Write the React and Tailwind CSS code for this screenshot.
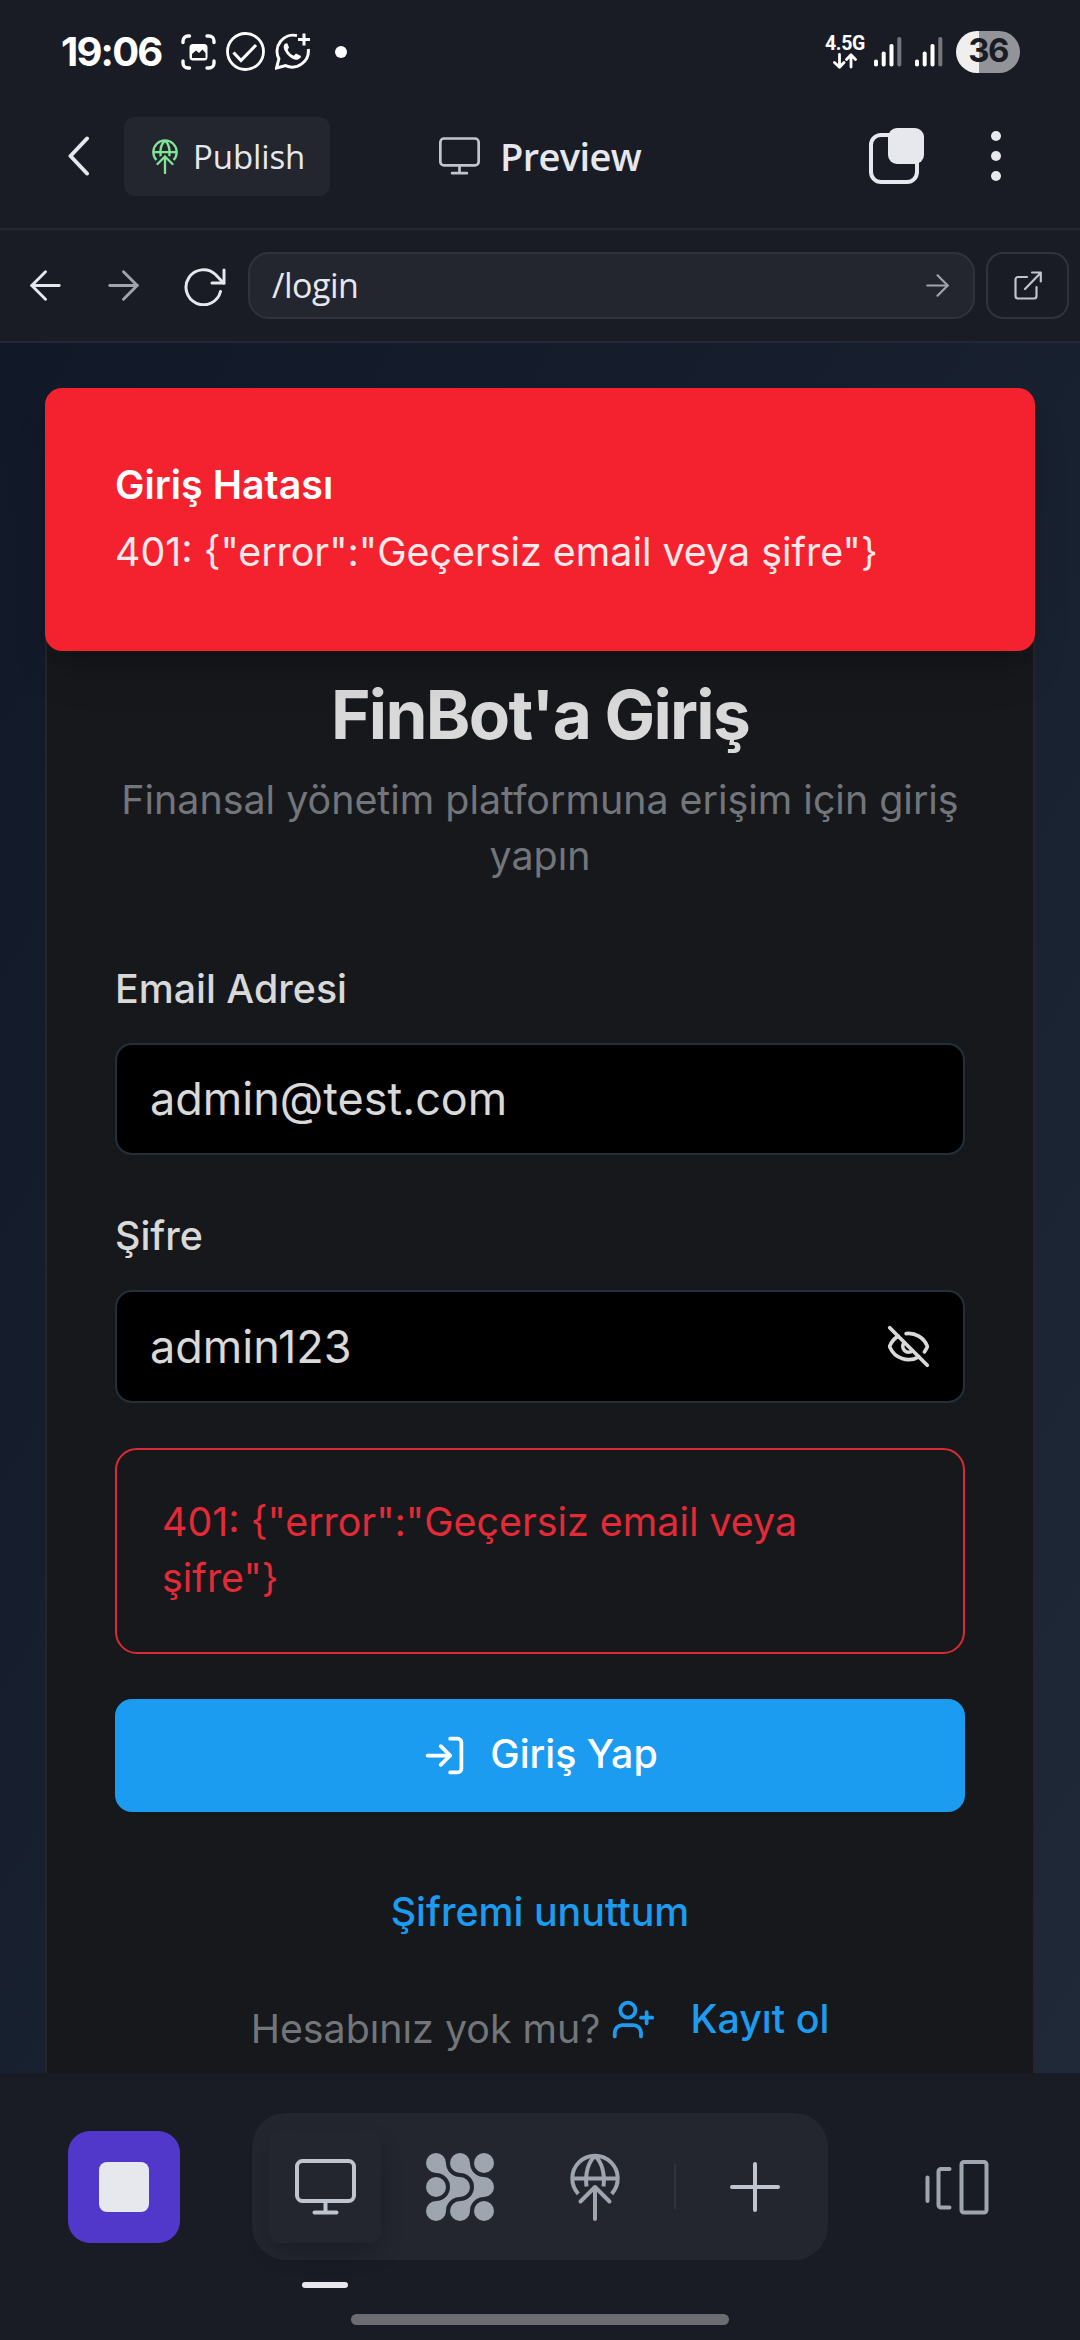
import React from "react";
import { ArrowLeft, ArrowRight, EyeOff, LogIn, UserPlus } from "lucide-react";

function PublishGlobe({ className, strokeWidth = 4 }) {
  return (
    <svg viewBox="0 0 50 68" fill="none" stroke="currentColor" strokeWidth={strokeWidth} strokeLinecap="round" strokeLinejoin="round" className={className}>
      <path d="M8.3 40.8A22.7 22.7 0 1 1 41.7 40.8" strokeLinecap="butt" />
      <path d="M2.5 25.5H47.5" strokeLinecap="butt" />
      <path d="M25 3C18 9 15 21 16.5 33.5M25 3C32 9 35 21 33.5 33.5" strokeLinecap="butt" />
      <path d="M25 34V66M10.5 48.5L25 34L39.5 48.5" />
    </svg>
  );
}

function Monitor({ className, strokeWidth = 4 }) {
  return (
    <svg viewBox="0 0 61 56" fill="none" stroke="currentColor" strokeWidth={strokeWidth} strokeLinecap="round" className={className}>
      <rect x="2" y="2" width="57" height="40" rx="5.5" />
      <path d="M30.5 42V53M19.5 53.5H41.5" />
    </svg>
  );
}

function Signal() {
  return (
    <svg viewBox="0 0 28 30" className="h-[30px] w-7" fill="white">
      <rect x="0" y="22.5" width="4" height="7" rx="1.8" />
      <rect x="7.7" y="14.5" width="4" height="15" rx="1.8" />
      <rect x="15.5" y="7" width="4" height="22.5" rx="1.8" />
      <rect x="23.3" y="0" width="4" height="29.5" rx="1.8" fill="#75767b" />
    </svg>
  );
}

function StatusBar() {
  return (
    <div className="flex h-[103px] shrink-0 items-center pl-[61px] pr-[60px] text-white">
      <span className="w-[101px] text-[40px] leading-none font-bold tracking-[-1.8px] whitespace-nowrap">19:06</span>
      <svg viewBox="0 0 35 36" fill="none" stroke="currentColor" strokeWidth="3.400" className="ml-[19px] h-9 w-[35px]" strokeLinecap="round">
        <path d="M2 8.500V7A5 5 0 0 1 7 2H8.500M26 2H28A5 5 0 0 1 33 7V8.500M33 27V29A5 5 0 0 1 28 34H26M8.500 34H7A5 5 0 0 1 2 29V27" />
        <rect x="8.500" y="10" width="18" height="16.500" rx="3.500" fill="white" stroke="none" />
        <path d="M11 24V20L15 16.500L18 19L21.500 15.500L24.500 19V24Z" fill="#1a1c25" stroke="none" />
      </svg>
      <svg viewBox="0 0 39 39" fill="none" stroke="currentColor" strokeWidth="2.8" className="ml-[10px] h-[39px] w-[39px]">
        <circle cx="19.500" cy="19.500" r="18" />
        <path d="M7.500 20.500L15 28.500L30 13" strokeWidth="3.200" />
      </svg>
      <svg viewBox="0 0 35 37" fill="none" stroke="currentColor" strokeWidth="3" className="ml-[10px] h-[37px] w-[35px]">
        <path d="M22 2.600A16.200 16.200 0 0 0 3.900 25.800L1.500 35L10.600 32.600A16.200 16.200 0 0 0 33.300 16" />
        <path d="M29 0.500V12.500M23 6.500H35" />
        <path d="M10.500 10.500C8.500 11.500 8 14.500 10 18C12.500 22.500 16.500 26 20.500 26.800C23.500 27.200 26 25 26 23L21 20.500L18.800 22.800C16 21.800 13.500 19 12.600 16.800L14 14.500L12.300 10.300Z" fill="white" stroke="none" />
      </svg>
      <span className="ml-[25px] size-3 rounded-full bg-white" />
      <div className="ml-auto flex w-9 flex-col items-center">
        <span className="font-['Roboto'] text-[19.5px] leading-[18px] font-bold tracking-[-0.3px]">4.5G</span>
        <svg viewBox="0 0 24 16" fill="none" stroke="currentColor" strokeWidth="2.800" strokeLinecap="round" strokeLinejoin="round" className="h-4 w-6">
          <path d="M6.500 1.500V14M1.500 9.500L6.500 14.300L11 9.500M18 14V2M13.500 6.500L18 1.700L22.500 6.500" />
        </svg>
      </div>
      <div className="ml-[11px]"><Signal /></div>
      <div className="ml-[13px]"><Signal /></div>
      <div className="ml-[13px] flex h-[42px] w-16 items-center justify-center rounded-full bg-[linear-gradient(to_right,#efefef_36%,#939499_36%)] pb-px text-[33px] font-bold tracking-[-1.5px] text-[#1a1c25]">36</div>
    </div>
  );
}

function Header() {
  return (
    <header className="flex h-[127px] shrink-0 items-center border-b-2 border-[#252731] pb-[19px] text-[#e6e8ee]">
      <svg viewBox="0 0 22 40" fill="none" stroke="currentColor" strokeWidth="4" strokeLinecap="round" strokeLinejoin="round" className="ml-[68px] h-10 w-[22px]">
        <path d="M19 2.500L2.500 20L19 37.500" />
      </svg>
      <div className="ml-[34px] flex h-[79px] w-[206px] items-center rounded-[11px] bg-[#23262f] pl-7">
        <PublishGlobe className="h-[35px] w-[26px] text-[#82e596]" strokeWidth={4.5} />
        <span className="ml-[15px] font-['Open_Sans'] text-[33px] leading-none tracking-[-0.1px]">Publish</span>
      </div>
      <Monitor className="ml-[109px] h-[38px] w-[41px] text-[#c0c4ce]" strokeWidth={4} />
      <span className="ml-[20px] w-[146px] font-['Open_Sans'] text-[38px] leading-none font-semibold tracking-[-0.6px] whitespace-nowrap">Preview</span>
      <svg viewBox="0 0 55 58" className="ml-[223px] h-[58px] w-[55px]">
        <rect x="2" y="8" width="46" height="47" rx="10" fill="none" stroke="#e6e8ee" strokeWidth="4" />
        <rect x="19" y="1" width="36" height="36" rx="9" fill="#e6e8ee" />
      </svg>
      <div className="ml-[67px] flex flex-col gap-[10px]">
        <span className="size-[10px] rounded-full bg-[#e6e8ee]" />
        <span className="size-[10px] rounded-full bg-[#e6e8ee]" />
        <span className="size-[10px] rounded-full bg-[#e6e8ee]" />
      </div>
    </header>
  );
}

function AddressBar() {
  return (
    <div className="flex h-[113px] shrink-0 items-center border-b-2 border-[#252731] pl-[22px] text-[#e6e8ee]">
      <ArrowLeft size={47} strokeWidth={1.5} />
      <ArrowRight size={47} strokeWidth={1.5} className="ml-[31px] text-[#9fa4af]" />
      <svg viewBox="0 0 42 40" fill="none" stroke="currentColor" strokeWidth="3" strokeLinecap="round" className="ml-[37px] h-10 w-[42px]">
        <path d="M36.500 25.500A17.500 17.500 0 1 1 31.500 8.500L39.500 17" />
        <path d="M40 4V17H28" />
      </svg>
      <div className="ml-[22px] flex h-[67px] w-[727px] items-center justify-between rounded-[21px] border-2 border-[#30333e] bg-[#23262f] pr-[18px] pl-[22px]">
        <span className="pb-[2px] font-['Open_Sans'] text-[34px] leading-none tracking-[-0.5px]">/login</span>
        <ArrowRight size={35} strokeWidth={1.5} className="text-[#9fa4af]" />
      </div>
      <div className="ml-[11px] flex h-[67px] w-[83px] items-center justify-center rounded-[17px] border-2 border-[#30333e]">
        <svg viewBox="0 0 28 29" fill="none" stroke="currentColor" strokeWidth="2.200" strokeLinecap="round" strokeLinejoin="round" className="h-[29px] w-7 text-[#c0c4ce]">
          <path d="M13 6H4A2.500 2.500 0 0 0 1.500 8.500V25A2.500 2.500 0 0 0 4 27.500H20A2.500 2.500 0 0 0 22.500 25V16" />
          <path d="M11 18L26.500 2M18 1.500H26.800V10.500" />
        </svg>
      </div>
    </div>
  );
}

function Toast() {
  return (
    <div className="absolute top-[45px] left-[45px] flex h-[263px] w-[990px] flex-col rounded-[17px] bg-[#f4212e] pt-[69px] pl-[70px] leading-[56px] text-white shadow-[0_28px_42px_-8px_rgba(0,0,0,0.15),0_11px_17px_-11px_rgba(0,0,0,0.2)]">
      <span className="font-semibold">Giriş Hatası</span>
      <span className="mt-[11px] text-white/90">{'401: {"error":"Geçersiz email veya şifre"}'}</span>
    </div>
  );
}

function LoginCard() {
  return (
    <div className="h-[1800px] rounded-[22px] border-2 border-[#232528] bg-[#17181c] px-[68px] pt-[291px] leading-[56px] text-[#d9d9d9]">
      <h1 className="text-center text-[67.5px] leading-[68px] font-bold tracking-[-1.69px]">FinBot'a Giriş</h1>
      <p className="mt-[23px] text-center leading-[56.25px] text-[#72767a]">Finansal yönetim platformuna erişim için giriş yapın</p>
      <label className="mt-[76px] block font-medium">Email Adresi</label>
      <div className="mt-[26px] flex h-28 items-center rounded-[17px] border-2 border-[#22303c] bg-black pl-[33px] text-[45px]">admin@test.com</div>
      <label className="mt-[53px] block font-medium">Şifre</label>
      <div className="mt-[26px] flex h-[113px] items-center justify-between rounded-[17px] border-2 border-[#22303c] bg-black pr-[32px] pl-[33px] text-[45px]">
        <span className="pt-px">admin123</span>
        <EyeOff size={45} />
      </div>
      <div className="mt-[45px] h-[206px] rounded-[22px] border-2 border-[#dc2a36] px-[45px] pt-[44px] text-[#e32a36]">{'401: {"error":"Geçersiz email veya şifre"}'}</div>
      <button className="mt-[45px] flex h-[113px] w-full items-center justify-center rounded-[17px] bg-[#1c9cf0] font-medium text-white">
        <LogIn size={45} />
        <span className="ml-[23px] pb-[2px]">Giriş Yap</span>
      </button>
      <div className="mt-[72px] text-center font-medium text-[#1c9cf0]">Şifremi unuttum</div>
      <div className="mt-[51px] flex h-[68px] items-start justify-center">
        <span className="mt-[10px] text-[#72767a]">Hesabınız yok mu?</span>
        <UserPlus size={45} className="mt-[6px] ml-[11px] text-[#1c9cf0]" />
        <span className="ml-[34px] font-medium text-[#1c9cf0]">Kayıt ol</span>
      </div>
    </div>
  );
}

function DotsIcon() {
  const centers = [10, 34, 58];
  return (
    <svg viewBox="0 0 68 68" className="size-[68px]" fill="#9fa5af">
      {centers.map((y) => centers.map((x) => <circle key={x + "-" + y} cx={x} cy={y} r="10" />))}
      <path d="M10 20A14 14 0 0 1 24 34A14 14 0 0 1 10 48L20 58A14 14 0 0 1 34 44V24A14 14 0 0 1 20 10Z" />
      <path d="M34 20A14 14 0 0 1 48 34A14 14 0 0 1 34 48L44 58A14 14 0 0 1 58 44V24A14 14 0 0 1 44 10Z" />
    </svg>
  );
}

function BottomBar() {
  return (
    <footer className="flex h-[267px] shrink-0 flex-col bg-[#1a1c25] pt-10">
      <div className="flex items-center">
        <div className="ml-[68px] flex size-28 items-center justify-center rounded-[22px] bg-[#5238ca]">
          <span className="size-[50px] rounded-[8px] bg-[#e6e8ee]" />
        </div>
        <div className="ml-[72px] flex h-[147px] w-[576px] items-center rounded-[34px] bg-[#23262f] pl-[17px]">
          <div className="flex size-28 items-center justify-center rounded-[11px] bg-[#23262f] shadow-[0_11px_22px_rgba(2,2,3,0.2)]">
            <Monitor className="h-14 w-[61px] text-[#c0c4ce]" />
          </div>
          <div className="ml-[45px]"><DotsIcon /></div>
          <PublishGlobe className="ml-[76px] h-[68px] w-[50px] text-[#9fa5af]" />
          <span className="ml-[54px] h-[45px] w-[2px] bg-[#30333e]" />
          <svg viewBox="0 0 50 50" stroke="#c0c4ce" strokeWidth="4" strokeLinecap="round" className="ml-[54px] size-[50px]">
            <path d="M25 2V48M2 25H48" />
          </svg>
        </div>
        <svg viewBox="0 0 64 56" fill="none" stroke="#9fa5af" strokeWidth="4" strokeLinecap="round" className="ml-[97px] h-14 w-16">
          <path d="M2.500 18.500V42M24.500 10H16A2.500 2.500 0 0 0 13.500 12.500V46A2.500 2.500 0 0 0 16 48.500H24.500" />
          <rect x="36.500" y="3" width="25" height="50.500" rx="2.500" />
        </svg>
      </div>
      <span className="mt-[22px] ml-[302px] h-[6px] w-[46px] rounded-full bg-[#e6e8ee]" />
      <span className="mt-[26px] ml-[351px] h-[11px] w-[378px] rounded-full bg-[#6c6d73]" />
    </footer>
  );
}

export default function App() {
  return (
    <div className="flex h-[2340px] w-[1080px] flex-col overflow-hidden bg-[#1a1c25] font-['Inter',sans-serif] text-[39.375px]">
      <StatusBar />
      <Header />
      <AddressBar />
      <main className="relative min-h-0 flex-1 overflow-hidden bg-linear-to-br from-[#111827] to-[#1f2937] p-[45px]">
        <LoginCard />
        <Toast />
      </main>
      <BottomBar />
    </div>
  );
}
